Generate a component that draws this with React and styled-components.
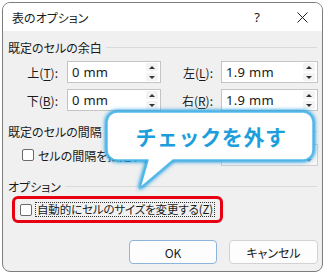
import React from "react";
import styled, { createGlobalStyle } from "styled-components";

const JP = '"Noto Sans CJK JP", "Noto Sans", sans-serif';
const LAT = '"Noto Sans", "Noto Sans CJK JP", sans-serif';

const Global = createGlobalStyle`
  html, body { margin: 0; padding: 0; background: #ffffff; }
  body { width: 326px; height: 275px; overflow: hidden; font-family: ${JP}; }
  * { box-sizing: border-box; }
`;

const Stage = styled.div`
  position: relative;
  width: 326px;
  height: 275px;
  padding: 2px 3px 3px 2px;
`;

const Window = styled.div`
  width: 321px;
  height: 270px;
  border: 1px solid #7d7d7d;
  border-radius: 8px;
  background: #f0f0f0;
  overflow: hidden;
  display: flex;
  flex-direction: column;
`;

const TitleBar = styled.div`
  height: 28px;
  background: #ffffff;
  display: flex;
  align-items: center;
  padding: 0 0 0 9px;
  flex-shrink: 0;
`;

const Title = styled.div`
  flex: 1;
  font-family: ${JP};
  font-feature-settings: "palt";
  font-size: 12px;
  color: #1a1a1a;
  margin-top: 1px;
`;

const TitleButton = styled.div`
  width: ${(p) => p.$w}px;
  height: 28px;
  display: flex;
  align-items: center;
  justify-content: center;
  font-family: ${LAT};
  font-size: 13px;
  color: #1a1a1a;
`;

const Body = styled.div`
  flex: 1;
  display: flex;
  flex-direction: column;
  padding: 8px 4px 0 5px;
`;

const SectionHeader = styled.div`
  height: 16px;
  display: flex;
  align-items: center;
  gap: 4px;
  margin-top: ${(p) => p.$mt || 0}px;
  font-family: ${JP};
  font-feature-settings: "palt";
  font-size: 12px;
  color: #1a1a1a;
  &::after {
    content: "";
    flex: 1;
    height: 1px;
    background: #dadada;
    margin-right: 1px;
  }
`;

const Grid = styled.div`
  display: grid;
  grid-template-columns: 59px 94px 60px 97px;
  row-gap: 6px;
  margin-top: ${(p) => p.$mt || 0}px;
  align-items: center;
`;

const FieldLabel = styled.div`
  text-align: right;
  padding-right: ${(p) => p.$pr}px;
  font-family: ${JP};
  font-feature-settings: "palt";
  font-size: 12px;
  color: #1a1a1a;
  u { text-decoration: underline; text-underline-offset: 2px; }
`;

const Input = styled.div`
  height: 22px;
  border: 1px solid ${(p) => (p.$disabled ? "#cfcfcf" : "#c4c4c4")};
  background: ${(p) => (p.$disabled ? "#f6f6f6" : "#ffffff")};
  display: flex;
  align-items: center;
  padding-left: 4px;
  font-family: ${LAT};
  font-size: 13px;
  letter-spacing: 0.3px;
  color: #1a1a1a;
`;

const Value = styled.span`
  flex: 1;
`;

const Spinner = styled.div`
  width: 12px;
  height: 18px;
  margin-right: 2px;
  display: flex;
  flex-direction: column;
  gap: 2px;
  opacity: ${(p) => (p.$disabled ? 0.5 : 1)};
`;

const SpinBtn = styled.div`
  flex: 1;
  display: flex;
  align-items: center;
  justify-content: center;
  background: #f3f3f3;
  border-radius: 1px;
`;

const Tri = styled.span`
  width: 0;
  height: 0;
  border-left: 3px solid transparent;
  border-right: 3px solid transparent;
  ${(p) =>
    p.$down
      ? "border-top: 3px solid #333;"
      : "border-bottom: 3px solid #333;"}
`;

const CheckRow = styled.div`
  display: flex;
  align-items: center;
  gap: 4px;
  padding-left: ${(p) => p.$pl}px;
  grid-column: ${(p) => p.$span || "auto"};
  font-family: ${JP};
  font-feature-settings: "palt";
  font-size: ${(p) => p.$fs || 12}px;
  color: #1a1a1a;
  white-space: nowrap;
`;

const Box = styled.span`
  width: 12px;
  height: 12px;
  border: 1px solid #6a6a6a;
  border-radius: 2px;
  background: #ffffff;
  flex-shrink: 0;
`;

const Focus = styled.span`
  outline: 1px dotted #333;
  outline-offset: 0px;
  padding: 0 1px;
  line-height: 13px;
  letter-spacing: -0.15px;
`;

const Highlight = styled.div`
  margin: 2px 0 0 4px;
  width: 211px;
  height: 27px;
  border: 3px solid #e60012;
  border-radius: 6px;
  display: flex;
  align-items: center;
`;

const Buttons = styled.div`
  display: flex;
  justify-content: flex-end;
  gap: 12px;
  margin-top: 17px;
  padding-right: 0px;
`;

const Button = styled.div`
  width: ${(p) => p.$w}px;
  height: 24px;
  border: 1px solid ${(p) => (p.$primary ? "#8cb4dc" : "#d2d2d2")};
  border-radius: 4px;
  background: #fdfdfd;
  display: flex;
  align-items: center;
  justify-content: center;
  font-family: ${JP};
  font-feature-settings: "palt";
  font-size: 12px;
  color: #1a1a1a;
`;

const Callout = styled.div`
  position: absolute;
  left: 105px;
  top: 110px;
  width: 212px;
  height: 82px;
`;

const CalloutShape = styled.svg`
  position: absolute;
  inset: 0;
  overflow: visible;
  filter: drop-shadow(0 0 2px #1596dc) drop-shadow(0 0 1.5px #2fa8e6);
`;

const CalloutText = styled.div`
  position: absolute;
  left: 2px;
  top: 2px;
  width: 208px;
  height: 48px;
  display: flex;
  align-items: center;
  justify-content: center;
  font-family: ${JP};
  font-weight: 700;
  font-size: 21px;
  letter-spacing: 0.6px;
  color: #1c9edc;
`;

function Spin({ disabled }) {
  return (
    <Spinner $disabled={disabled}>
      <SpinBtn>
        <Tri />
      </SpinBtn>
      <SpinBtn>
        <Tri $down />
      </SpinBtn>
    </Spinner>
  );
}

function Field({ value, disabled }) {
  return (
    <Input $disabled={disabled}>
      <Value>{value}</Value>
      <Spin disabled={disabled} />
    </Input>
  );
}

export default function App() {
  return (
    <>
      <Global />
      <Stage>
        <Window>
          <TitleBar>
            <Title>表のオプション</Title>
            <TitleButton $w={28}>?</TitleButton>
            <TitleButton $w={11} />
            <TitleButton $w={40}>
              <svg width="11" height="11" viewBox="0 0 11 11">
                <path d="M0.5 0.5 L10.5 10.5 M10.5 0.5 L0.5 10.5" stroke="#1a1a1a" strokeWidth="1" />
              </svg>
            </TitleButton>
          </TitleBar>
          <Body>
            <SectionHeader>既定のセルの余白</SectionHeader>
            <Grid $mt={6}>
              <FieldLabel $pr={9}>
                上(<u>T</u>):
              </FieldLabel>
              <Field value="0 mm" />
              <FieldLabel $pr={8}>
                左(<u>L</u>):
              </FieldLabel>
              <Field value="1.9 mm" />
              <FieldLabel $pr={9}>
                下(<u>B</u>):
              </FieldLabel>
              <Field value="0 mm" />
              <FieldLabel $pr={8}>
                右(<u>R</u>):
              </FieldLabel>
              <Field value="1.9 mm" />
            </Grid>
            <SectionHeader $mt={12}>既定のセルの間隔</SectionHeader>
            <Grid $mt={5}>
              <CheckRow $pl={14} $span="1 / 4">
                <Box />
                <span>
                  セルの間隔を指定する(<u>S</u>)
                </span>
              </CheckRow>
              <Field value="" disabled />
            </Grid>
            <SectionHeader $mt={12}>オプション</SectionHeader>
            <Highlight>
              <CheckRow $pl={5} $fs={11.5}>
                <Box />
                <Focus>自動的にセルのサイズを変更する(Z)</Focus>
              </CheckRow>
            </Highlight>
            <Buttons>
              <Button $w={88} $primary>OK</Button>
              <Button $w={89}>キャンセル</Button>
            </Buttons>
          </Body>
        </Window>
        <Callout>
          <CalloutShape width="212" height="82" viewBox="0 0 212 82">
            <path
              d="M12 2 H198 A10 10 0 0 1 208 12 V40 A10 10 0 0 1 198 50 H68 L35 78 L43 50 H12 A10 10 0 0 1 2 40 V12 A10 10 0 0 1 12 2 Z"
              fill="#ffffff"
              stroke="#57bdea"
              strokeWidth="1.5"
              strokeLinejoin="round"
            />
          </CalloutShape>
          <CalloutText>チェックを外す</CalloutText>
        </Callout>
      </Stage>
    </>
  );
}
